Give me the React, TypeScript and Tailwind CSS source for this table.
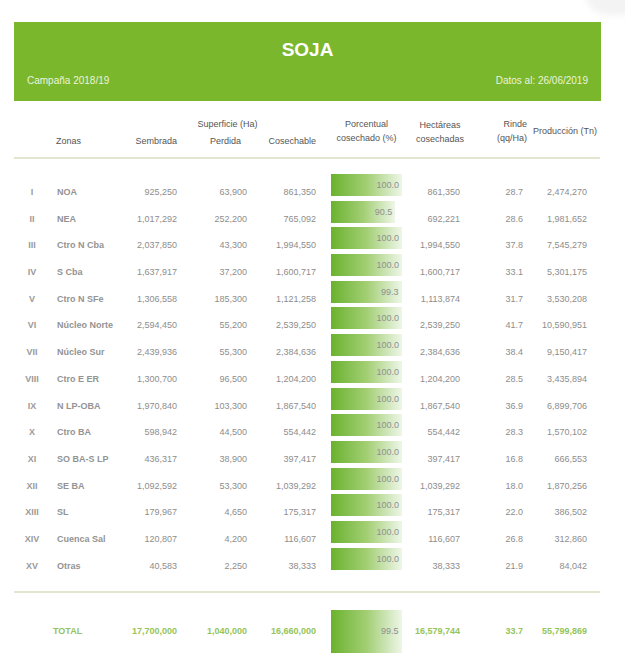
const rows = [
  { n: "I", zona: "NOA", sem: "925,250", per: "63,900", cos: "861,350", pct: 100.0, hec: "861,350", rinde: "28.7", prod: "2,474,270" },
  { n: "II", zona: "NEA", sem: "1,017,292", per: "252,200", cos: "765,092", pct: 90.5, hec: "692,221", rinde: "28.6", prod: "1,981,652" },
  { n: "III", zona: "Ctro N Cba", sem: "2,037,850", per: "43,300", cos: "1,994,550", pct: 100.0, hec: "1,994,550", rinde: "37.8", prod: "7,545,279" },
  { n: "IV", zona: "S Cba", sem: "1,637,917", per: "37,200", cos: "1,600,717", pct: 100.0, hec: "1,600,717", rinde: "33.1", prod: "5,301,175" },
  { n: "V", zona: "Ctro N SFe", sem: "1,306,558", per: "185,300", cos: "1,121,258", pct: 99.3, hec: "1,113,874", rinde: "31.7", prod: "3,530,208" },
  { n: "VI", zona: "Núcleo Norte", sem: "2,594,450", per: "55,200", cos: "2,539,250", pct: 100.0, hec: "2,539,250", rinde: "41.7", prod: "10,590,951" },
  { n: "VII", zona: "Núcleo Sur", sem: "2,439,936", per: "55,300", cos: "2,384,636", pct: 100.0, hec: "2,384,636", rinde: "38.4", prod: "9,150,417" },
  { n: "VIII", zona: "Ctro E ER", sem: "1,300,700", per: "96,500", cos: "1,204,200", pct: 100.0, hec: "1,204,200", rinde: "28.5", prod: "3,435,894" },
  { n: "IX", zona: "N LP-OBA", sem: "1,970,840", per: "103,300", cos: "1,867,540", pct: 100.0, hec: "1,867,540", rinde: "36.9", prod: "6,899,706" },
  { n: "X", zona: "Ctro BA", sem: "598,942", per: "44,500", cos: "554,442", pct: 100.0, hec: "554,442", rinde: "28.3", prod: "1,570,102" },
  { n: "XI", zona: "SO BA-S LP", sem: "436,317", per: "38,900", cos: "397,417", pct: 100.0, hec: "397,417", rinde: "16.8", prod: "666,553" },
  { n: "XII", zona: "SE BA", sem: "1,092,592", per: "53,300", cos: "1,039,292", pct: 100.0, hec: "1,039,292", rinde: "18.0", prod: "1,870,256" },
  { n: "XIII", zona: "SL", sem: "179,967", per: "4,650", cos: "175,317", pct: 100.0, hec: "175,317", rinde: "22.0", prod: "386,502" },
  { n: "XIV", zona: "Cuenca Sal", sem: "120,807", per: "4,200", cos: "116,607", pct: 100.0, hec: "116,607", rinde: "26.8", prod: "312,860" },
  { n: "XV", zona: "Otras", sem: "40,583", per: "2,250", cos: "38,333", pct: 100.0, hec: "38,333", rinde: "21.9", prod: "84,042" },
];

// same column template for header, rows and total
const cols = "grid grid-cols-[36px_75px_52px_70px_69px_94px_60px_54px_77px]";

const Bar = ({ pct, tall }: { pct: number; tall?: boolean }) => (
  <div className="pl-[15px]">
    <div className="w-[71px]">
      <div
        className={`${tall ? "h-[43px] leading-[43px]" : "h-[22px] leading-[22px]"} bg-linear-to-r from-[#6ab22a] via-[#a2ce72] to-[#eff6e8] text-right pr-[3px] text-[#8f8f8f]`}
        style={{ width: `${pct}%` }}
      >
        {pct.toFixed(1)}
      </div>
    </div>
  </div>
);

export default function App() {
  return (
    <div className="relative w-[625px] h-[662px] bg-white overflow-hidden font-['Liberation_Sans',Arial,sans-serif] text-[9px]">
      {/* faint edge of something behind, top right */}
      <div className="absolute -top-[30px] -right-[40px] w-[80px] h-[45px] rounded-full bg-[#f3f3f3] blur-[3px]" />

      <div className="relative pt-[22px] px-[14px] w-[615px]">
        {/* Banner */}
        <div className="bg-[#7ab72d] h-[79px] text-white flex flex-col">
          <div className="text-center font-bold text-[19px] pt-[17px] leading-[22px]">SOJA</div>
          <div className="flex justify-between px-[13px] mt-[12px] text-[10px] text-[#eaf4dc]">
            <span>Campaña 2018/19</span>
            <span>Datos al: 26/06/2019</span>
          </div>
        </div>

        {/* Column headers */}
        <div className={`${cols} grid-rows-[14px_14px] pt-[16px] pb-[12px] text-[#555] leading-[14px]`}>
          <div className="col-start-3 col-span-3 row-start-1 text-center pl-[14px]">Superficie (Ha)</div>
          <div className="col-start-2 row-start-2 pl-[6px] leading-[20px]">Zonas</div>
          <div className="col-start-3 row-start-2 text-right leading-[20px]">Sembrada</div>
          <div className="col-start-4 row-start-2 text-right pr-[6px] leading-[20px]">Perdida</div>
          <div className="col-start-5 row-start-2 text-right leading-[20px]">Cosechable</div>
          <div className="col-start-6 row-start-1 row-span-2 pl-[15px]">
            <div className="w-[71px] text-center">
              Porcentual
              <br />
              cosechado (%)
            </div>
          </div>
          <div className="col-start-7 row-start-1 row-span-2 text-center pt-[1px]">
            Hectáreas
            <br />
            cosechadas
          </div>
          <div className="col-start-8 row-start-1 row-span-2 text-right -mr-[3px]">
            Rinde
            <br />
            (qq/Ha)
          </div>
          <div className="col-start-9 row-start-1 row-span-2 self-center pl-[9px] whitespace-nowrap">
            Producción (Tn)
          </div>
        </div>
        <div className="h-[2px] bg-[#e1e7cf] w-[586px]" />

        {/* Rows */}
        <div className="pt-[15px]">
          {rows.map((r) => (
            <div key={r.n} className={`${cols} h-[26.7px] text-[#8d8d8d] leading-[11px]`}>
              <div className="pt-[13px] text-center font-bold text-[#9a9a9a]">{r.n}</div>
              <div className="pt-[13px] pl-[7px] font-bold text-[#939393] whitespace-nowrap">{r.zona}</div>
              <div className="pt-[13px] text-right">{r.sem}</div>
              <div className="pt-[13px] text-right">{r.per}</div>
              <div className="pt-[13px] text-right">{r.cos}</div>
              <Bar pct={r.pct} />
              <div className="pt-[13px] text-right pr-[10px]">{r.hec}</div>
              <div className="pt-[13px] text-right pr-[1px]">{r.rinde}</div>
              <div className="pt-[13px] text-right pr-[14px]">{r.prod}</div>
            </div>
          ))}
        </div>

        <div className="h-[2px] bg-[#e1e7cf] w-[586px] mt-[17px]" />

        {/* Total */}
        <div className={`${cols} h-[43px] mt-[17px] items-center font-bold text-[#94c45a]`}>
          <div />
          <div className="pl-[3px]">TOTAL</div>
          <div className="text-right">17,700,000</div>
          <div className="text-right">1,040,000</div>
          <div className="text-right">16,660,000</div>
          <div className="font-normal">
            <Bar pct={99.5} tall />
          </div>
          <div className="text-right pr-[10px] whitespace-nowrap">16,579,744</div>
          <div className="text-right pr-[1px]">33.7</div>
          <div className="text-right pr-[14px]">55,799,869</div>
        </div>
      </div>
    </div>
  );
}
